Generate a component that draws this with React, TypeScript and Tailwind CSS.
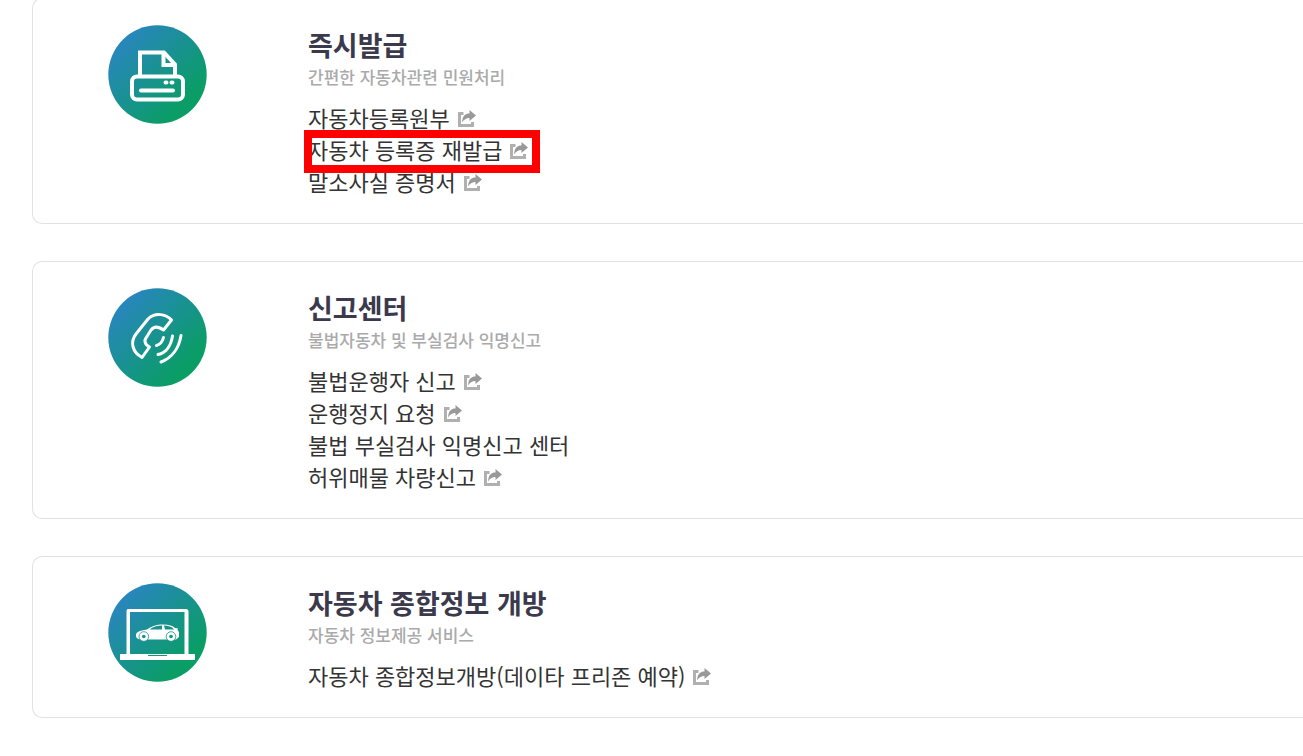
import type { ReactNode } from "react";

type ServiceLink = { label: string; external?: boolean; marked?: boolean };

type Service = {
  id: string;
  title: string;
  description: string;
  icon: ReactNode;
  links: ServiceLink[];
};

function Badge({ id, children }: { id: string; children: ReactNode }) {
  return (
    <svg className="size-[99px] shrink-0" viewBox="0 0 99 99" fill="none" aria-hidden="true">
      <defs>
        <linearGradient id={id} x1="0.15" y1="0.15" x2="0.85" y2="0.85">
          <stop offset="0" stopColor="#2886bd" />
          <stop offset="0.9" stopColor="#0a9d66" />
        </linearGradient>
      </defs>
      <circle cx="49.5" cy="49.5" r="49.2" fill={`url(#${id})`} />
      {children}
    </svg>
  );
}

const printer = (
  <g stroke="#fff" strokeWidth="4">
    <path d="M32 52V27.5H56L67 39.5V52" />
    <path d="M55.5 27.5V40H67" />
    <rect x="24" y="51.5" width="51" height="23" rx="5" />
    <path d="M33 65.5H65" strokeLinecap="round" />
    <path d="M57.5 57.5H58.5M63.5 57.5H64.5" strokeLinecap="round" />
  </g>
);

const phone = (
  <g stroke="#fff" strokeWidth="3" strokeLinejoin="round">
    <path d="M63.5 32C58 26 47 24 40 31L28 46C22 54 24 64 34 69.5L41.5 59C36 56 36.5 52 38 50L43 42C46 38 50 38 55.5 42Z" />
    <g strokeLinecap="round">
      <path d="M55.5 49.5C54.5 53.5 52 56.5 48.5 57.5" />
      <path d="M64.5 48C63 57.5 58 65 50 66.5" />
      <path d="M73 47.5C71 60 64 70 53 74" />
    </g>
  </g>
);

const laptop = (
  <g fill="#fff">
    <path
      fillRule="evenodd"
      d="M20 26H78C79.5 26 80.5 27 80.5 28.5V71H87V77H12V71H18.5V28.5C18.5 27 19 26 20 26ZM22 29V71H76.5V29ZM40 72V73H59V72Z"
    />
    <path
      fillRule="evenodd"
      d="M28 53C27.5 49 31 47.5 39 46.5C44 43 48 41.5 55 41.5C61 41.5 65 43 67 45L70 45.5L69.5 47L71 49V54L68 56.5H34C31 56.5 28 55.5 28 53ZM41.5 46.5H54V42.5C49 42.5 45 44 41.5 46.5ZM56 42.5L57 46.5H66C64 43.5 60 42.5 56 42.5Z"
    />
    <circle cx="35.8" cy="53.5" r="4.8" stroke="#1a9089" strokeWidth="0.8" />
    <circle cx="63" cy="53.5" r="4.8" stroke="#149280" strokeWidth="0.8" />
    <circle cx="35.8" cy="53.5" r="1.8" fill="#1a9089" />
    <circle cx="63" cy="53.5" r="1.8" fill="#149280" />
  </g>
);

const services: Service[] = [
  {
    id: "issue",
    title: "즉시발급",
    description: "간편한 자동차관련 민원처리",
    icon: printer,
    links: [
      { label: "자동차등록원부", external: true },
      { label: "자동차 등록증 재발급", external: true, marked: true },
      { label: "말소사실 증명서", external: true },
    ],
  },
  {
    id: "report",
    title: "신고센터",
    description: "불법자동차 및 부실검사 익명신고",
    icon: phone,
    links: [
      { label: "불법운행자 신고", external: true },
      { label: "운행정지 요청", external: true },
      { label: "불법 부실검사 익명신고 센터" },
      { label: "허위매물 차량신고", external: true },
    ],
  },
  {
    id: "open-data",
    title: "자동차 종합정보 개방",
    description: "자동차 정보제공 서비스",
    icon: laptop,
    links: [{ label: "자동차 종합정보개방(데이타 프리존 예약)", external: true }],
  },
];

function ExternalIcon() {
  return (
    <svg className="mt-1 size-[18px] shrink-0" viewBox="0 0 18 18" fill="none" aria-hidden="true">
      <path d="M5.5 3.5H1.5V15.5H14.5V12" stroke="#b0b0b0" strokeWidth="3" />
      <path d="M4 12.5C4.5 6 7 3.5 11.5 3.5V0L18 5.5L11.5 11V8C8 8 6 9.5 4 12.5Z" fill="#999" />
    </svg>
  );
}

function ServiceCard({ service }: { service: Service }) {
  return (
    <section className="flex gap-[101px] rounded-l-[10px] border border-r-0 border-[#e1e1e1] py-[26px] pl-[75px]">
      <Badge id={service.id}>{service.icon}</Badge>
      <div>
        <h2 className="text-[27px] leading-10 font-bold text-[#3b3a4c]">{service.title}</h2>
        <p className="text-[17px] leading-6 font-medium text-[#aaa]">{service.description}</p>
        <ul className="mt-3">
          {service.links.map((link) => (
            <li key={link.label} className="flex">
              <a
                href="#"
                className="relative flex items-center gap-2 text-[22px] leading-8 whitespace-nowrap text-[#333]"
              >
                {link.label}
                {link.external && <ExternalIcon />}
                {link.marked && (
                  <span className="absolute -top-[3px] -right-3 -bottom-2 -left-1 z-10 border-8 border-[#f00]" />
                )}
              </a>
            </li>
          ))}
        </ul>
      </div>
    </section>
  );
}

export default function App() {
  return (
    <main
      lang="ko"
      className="-mt-0.5 flex flex-col gap-[37px] overflow-hidden bg-white pl-8 font-['Noto_Sans_CJK_KR',sans-serif]"
    >
      {services.map((service) => (
        <ServiceCard key={service.id} service={service} />
      ))}
    </main>
  );
}
